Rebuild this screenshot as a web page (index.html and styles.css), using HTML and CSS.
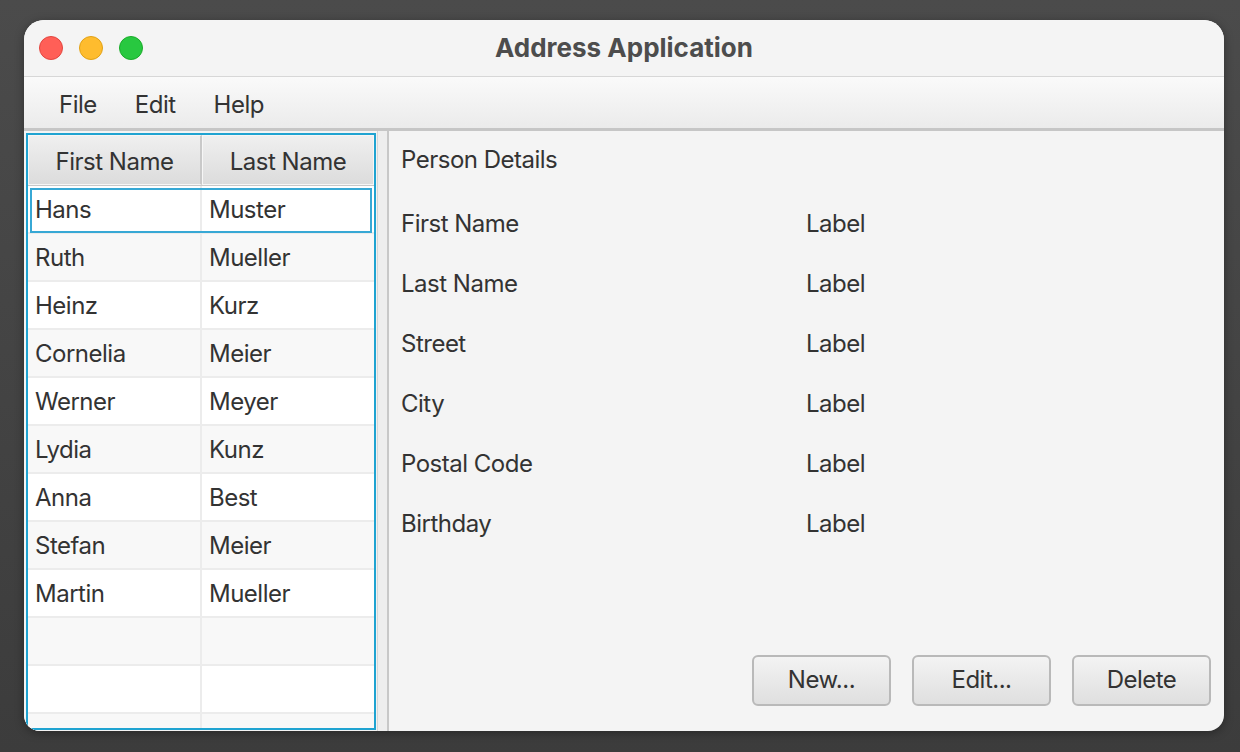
FILE: index.html
```html
<!DOCTYPE html>
<html>
<head>
<meta charset="utf-8">
<title>Address Application</title>
<link rel="stylesheet" href="styles.css">
</head>
<body>
<div class="window">
  <div class="titlebar">
    <div class="lights">
      <span class="light red"></span>
      <span class="light yellow"></span>
      <span class="light green"></span>
    </div>
    <div class="title">Address Application</div>
    <div></div>
  </div>
  <div class="menubar">
    <span class="menu">File</span>
    <span class="menu">Edit</span>
    <span class="menu">Help</span>
  </div>
  <div class="split">
    <div class="left">
      <div class="table">
        <div class="thead">
          <div class="th">First Name</div>
          <div class="th">Last Name</div>
        </div>
        <div class="tbody">
          <div class="row selected"><div class="td">Hans</div><div class="td">Muster</div></div>
          <div class="row"><div class="td">Ruth</div><div class="td">Mueller</div></div>
          <div class="row"><div class="td">Heinz</div><div class="td">Kurz</div></div>
          <div class="row"><div class="td">Cornelia</div><div class="td">Meier</div></div>
          <div class="row"><div class="td">Werner</div><div class="td">Meyer</div></div>
          <div class="row"><div class="td">Lydia</div><div class="td">Kunz</div></div>
          <div class="row"><div class="td">Anna</div><div class="td">Best</div></div>
          <div class="row"><div class="td">Stefan</div><div class="td">Meier</div></div>
          <div class="row"><div class="td">Martin</div><div class="td">Mueller</div></div>
          <div class="row"><div class="td"></div><div class="td"></div></div>
          <div class="row"><div class="td"></div><div class="td"></div></div>
          <div class="row"><div class="td"></div><div class="td"></div></div>
        </div>
      </div>
    </div>
    <div class="divider"></div>
    <div class="right">
      <div class="heading">Person Details</div>
      <div class="details">
        <div class="key">First Name</div><div class="val">Label</div>
        <div class="key">Last Name</div><div class="val">Label</div>
        <div class="key">Street</div><div class="val">Label</div>
        <div class="key">City</div><div class="val">Label</div>
        <div class="key">Postal Code</div><div class="val">Label</div>
        <div class="key">Birthday</div><div class="val">Label</div>
      </div>
      <div class="buttons">
        <button class="btn">New...</button>
        <button class="btn">Edit...</button>
        <button class="btn">Delete</button>
      </div>
    </div>
  </div>
</div>
</body>
</html>
```
FILE: styles.css
```css
* { box-sizing: border-box; }
html, body { margin: 0; padding: 0; }
body {
  width: 1240px;
  height: 752px;
  overflow: hidden;
  background: linear-gradient(#4b4b4b, #3c3c3c);
  font-family: Inter, "Liberation Sans", sans-serif;
  color: #333333;
  padding: 20px 0 0 24px;
  letter-spacing: -0.5px;
}
.window {
  width: 1200px;
  height: 711px;
  border-radius: 20px 20px 16px 16px;
  overflow: hidden;
  background: #f4f4f4;
  display: flex;
  flex-direction: column;
  box-shadow: 0 2px 10px rgba(0,0,0,0.35);
}
.titlebar {
  height: 57px;
  flex: none;
  background: #f4f4f4;
  border-bottom: 1px solid #d7d7d7;
  display: grid;
  grid-template-columns: 1fr auto 1fr;
  align-items: center;
}
.lights {
  display: flex;
  gap: 16px;
  padding-left: 15px;
}
.light {
  width: 24px;
  height: 24px;
  border-radius: 50%;
}
.red { background: #ff5f57; border: 1px solid #e2463f; }
.yellow { background: #febc2e; border: 1px solid #e1a116; }
.green { background: #28c840; border: 1px solid #1aab29; }
.title {
  font-weight: 700;
  font-size: 26px;
  letter-spacing: 0;
  color: #4d4d4d;
  padding-bottom: 2px;
}
.menubar {
  height: 54px;
  flex: none;
  background: linear-gradient(#fafafa, #ebebeb);
  border-bottom: 3px solid #c6c6c6;
  display: flex;
  align-items: center;
  padding-left: 16px;
  padding-top: 4px;
  font-size: 24px;
}
.menu { padding: 0 19px; }
.split {
  flex: 1;
  display: flex;
  min-height: 0;
}
.left {
  width: 352px;
  flex: none;
  padding: 2px 0 1px 2px;
  background: #f4f4f4;
}
.table {
  height: 100%;
  border: 2px solid #1fa3d1;
  background: #ffffff;
  overflow: hidden;
  font-size: 24px;
}
.thead {
  display: grid;
  grid-template-columns: 174px 172px;
  height: 51px;
  border-bottom: 1px solid #c8c8c8;
}
.th {
  background: linear-gradient(#efefef, #dcdcdc);
  border: 1px solid #f6f6f6;
  display: flex;
  align-items: center;
  justify-content: center;
  padding-top: 3px;
}
.th:first-child { border-right: 2px solid #c9c9c9; }
.row {
  display: grid;
  grid-template-columns: 174px 172px;
  height: 48px;
  border-bottom: 2px solid #ececec;
  background: #ffffff;
  position: relative;
}
.row:nth-child(even) { background: #f8f8f8; }
.td {
  display: flex;
  align-items: center;
  padding-left: 7px;
}
.td:first-child { border-right: 2px solid #ececec; }
.row.selected::after {
  content: "";
  position: absolute;
  left: 2px;
  right: 2px;
  top: 2px;
  bottom: -1px;
  border: 2px solid #37a8d5;
}
.divider {
  width: 13px;
  flex: none;
  background: linear-gradient(90deg, #f2f2f2 0 1px, #d6d6d6 1px 2px, #eeeeee 2px 11px, #c8c8c8 11px 13px);
}
.right {
  flex: 1;
  display: flex;
  flex-direction: column;
  padding: 14px 13px 25px 12px;
  font-size: 24px;
}
.heading {
  height: 30px;
  line-height: 30px;
}
.details {
  margin-top: 18px;
  display: grid;
  grid-template-columns: 1fr 1fr;
  grid-auto-rows: 60px;
  align-items: center;
}
.buttons {
  margin-top: auto;
  display: flex;
  justify-content: flex-end;
  gap: 21px;
}
.btn {
  width: 139px;
  height: 51px;
  font-family: inherit;
  font-size: 24px;
  letter-spacing: -0.5px;
  color: #333333;
  background: linear-gradient(#f3f3f3, #dfdfdf);
  border: 2px solid #b9b9b9;
  border-radius: 6px;
  padding: 0 0 2px;
}
```
